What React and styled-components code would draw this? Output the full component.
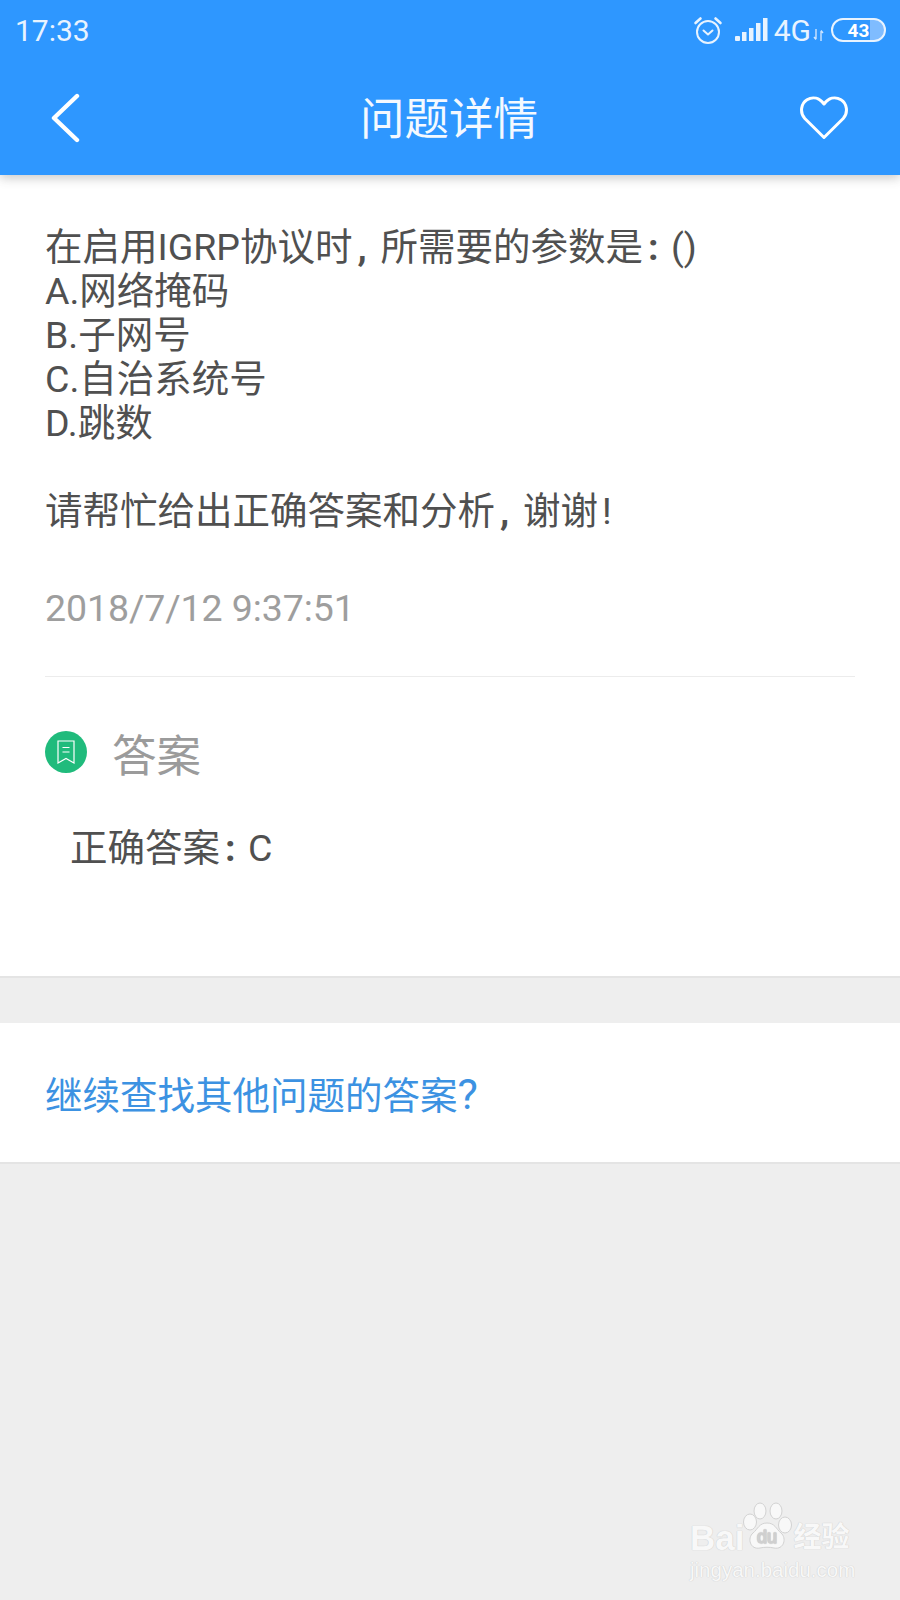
import styled, { createGlobalStyle } from "styled-components";

const GlobalStyle = createGlobalStyle`
  * { box-sizing: border-box; }
  html, body { margin: 0; padding: 0; background: #eeeeee; }
  body { font-family: Roboto, "Noto Sans CJK SC", sans-serif; }
`;

const Page = styled.div`
  position: relative;
  width: 900px;
  height: 1600px;
  overflow: hidden;
  background: #eeeeee;
`;

const Header = styled.header`
  position: relative;
  height: 175px;
  background: #2e97ff;
  box-shadow: 0 3px 10px rgba(60, 60, 60, 0.28);
  color: #fff;
`;

const StatusBar = styled.div`
  display: flex;
  align-items: center;
  justify-content: space-between;
  height: 60px;
  padding: 0 14px 0 15px;
`;

const Time = styled.span`
  font-size: 30px;
  font-weight: 400;
  color: #e8f3ff;
`;

const StatusIcons = styled.div`
  display: flex;
  align-items: center;
`;

const NetText = styled.span`
  font-size: 30px;
  font-weight: 400;
  margin-left: 6px;
  color: #e8f3ff;
`;

const Battery = styled.div`
  display: flex;
  align-items: center;
  justify-content: center;
  width: 55px;
  height: 24px;
  margin-left: 7px;
  border: 2px solid #e8f3ff;
  border-radius: 12px;
  font-size: 19px;
  font-weight: 700;
  background: linear-gradient(90deg, #2e97ff 0 72%, #7fbcff 72%);
`;

const Toolbar = styled.div`
  display: grid;
  grid-template-columns: 1fr auto 1fr;
  align-items: center;
  height: 115px;
  padding: 0 52px 0 50px;
`;

const ToolbarEnd = styled.div`
  display: flex;
  justify-content: ${(p) => (p.$right ? "flex-end" : "flex-start")};
`;

const Title = styled.h1`
  margin: 0;
  padding-top: 5px;
  font-size: 44.5px;
  font-weight: 400;
  line-height: 1;
  color: #f4f9ff;
`;

const Card = styled.section`
  background: #fff;
  border-bottom: 2px solid #e4e4e4;
`;

const Question = styled.div`
  padding: 50px 45px 0;
`;

const QuestionText = styled.p`
  margin: 0;
  font-size: 37.5px;
  line-height: 44px;
  color: #505050;
  white-space: pre-line;
`;

const Punct = styled.span`
  display: inline-block;
  width: 28px;
  padding-left: 5px;
  font-weight: 700;
`;

const Bang = styled.span`
  padding-left: 4px;
`;

const DateText = styled.div`
  margin-top: 53px;
  font-size: 37.5px;
  line-height: 44px;
  letter-spacing: -0.1px;
  color: #9e9e9e;
`;

const Divider = styled.div`
  height: 1px;
  margin: 46px 45px 0;
  background: #ececec;
`;

const AnswerHead = styled.div`
  display: flex;
  align-items: flex-start;
  gap: 25px;
  margin: 54px 45px 0;
`;

const Badge = styled.span`
  display: flex;
  align-items: center;
  justify-content: center;
  width: 42px;
  height: 42px;
  border-radius: 50%;
  background: #20bb7c;
`;

const AnswerTitle = styled.span`
  padding-top: 4px;
  font-size: 44.5px;
  line-height: 44px;
  color: #9b9b9b;
`;

const AnswerText = styled.div`
  margin: 47px 70px 0;
  padding-bottom: 106px;
  font-size: 37.5px;
  line-height: 44px;
  color: #505050;
`;

const MoreCard = styled.section`
  display: flex;
  align-items: center;
  height: 141px;
  margin-top: 45px;
  padding: 4px 45px 0;
  background: #fff;
  border-bottom: 2px solid #e4e4e4;
`;

const MoreLink = styled.a`
  font-size: 37.5px;
  line-height: 44px;
  color: #3c92e2;
`;

const BigMark = styled.span`
  font-size: 43px;
  line-height: 44px;
`;

const Watermark = styled.div`
  position: absolute;
  left: 690px;
  top: 1502px;
  width: 164px;
  color: #f8f8f8;
  text-shadow: 0 0 1px #cfcfcf, 0 0 1px #cfcfcf;
`;

const MarkRow = styled.div`
  display: flex;
  align-items: flex-end;
  height: 54px;
`;

const MarkBrand = styled.span`
  font-family: "Liberation Sans", sans-serif;
  font-size: 35px;
  font-weight: 700;
  line-height: 36px;
  margin-right: -2px;
`;

const MarkCn = styled.span`
  font-size: 28px;
  font-weight: 700;
  line-height: 36px;
  margin-left: 1px;
`;

const MarkUrl = styled.div`
  margin-top: 4px;
  font-family: "Liberation Sans", sans-serif;
  font-size: 20.5px;
  line-height: 20px;
  white-space: nowrap;
`;

const Alarm = () => (
  <svg width="30" height="30" viewBox="0 0 30 30" fill="none" stroke="#e8f3ff" strokeWidth="2" strokeLinecap="round" strokeLinejoin="round">
    <circle cx="15" cy="17" r="11" />
    <path d="M10.5 15.5 15 19.5 19.5 15.5" />
    <path d="M2.5 8 7.5 3.5" strokeWidth="2.6" />
    <path d="M27.5 8 22.5 3.5" strokeWidth="2.6" />
  </svg>
);

const Signal = () => (
  <svg width="33" height="24" viewBox="0 0 33 24" fill="#e8f3ff" style={{ marginLeft: 12 }}>
    <rect x="0" y="18" width="5" height="5" rx="1" />
    <rect x="7" y="14" width="4.5" height="9" />
    <rect x="14" y="10" width="4.5" height="13" />
    <rect x="21" y="5" width="4.5" height="18" />
    <rect x="28" y="0" width="4.5" height="23" />
  </svg>
);

const DataArrows = () => (
  <svg width="11" height="12" viewBox="0 0 11 12" fill="none" stroke="#cfe5ff" strokeWidth="1.4" style={{ alignSelf: "flex-end", marginBottom: 7, marginLeft: 2 }}>
    <path d="M3 0v10M1 8l2 2.5" />
    <path d="M8 12V2M10 4 8 1.5" />
  </svg>
);

const BackIcon = () => (
  <svg width="32" height="50" viewBox="0 0 32 50" fill="none" stroke="#fff" strokeWidth="4.4" strokeLinecap="round" strokeLinejoin="round">
    <path d="M27 3 4 25l23 22" />
  </svg>
);

const HeartIcon = () => (
  <svg width="48" height="44" viewBox="0 0 48 44" fill="none" stroke="#fff" strokeWidth="3" strokeLinejoin="round">
    <path d="M24 41.5 4.8 22.5C-0.5 16.5 1 7.5 7 3.8 13 0.2 19.5 2 24 8 28.5 2 35 0.2 41 3.8 47 7.5 48.5 16.5 43.2 22.5Z" />
  </svg>
);

const BookmarkIcon = () => (
  <svg width="18" height="24" viewBox="0 0 18 24" fill="none" stroke="#fff" strokeWidth="1.2">
    <path d="M1 1h16v22l-8-4.500-8 4.500z" />
    <path d="M5.500 7.500h7M5.500 12h7" />
  </svg>
);

const PawIcon = () => (
  <svg width="50" height="54" viewBox="0 0 50 54" fill="#f8f8f8" stroke="#d2d2d2" strokeWidth="1">
    <ellipse cx="8" cy="20" rx="6.5" ry="8" />
    <ellipse cx="18" cy="9" rx="6" ry="8" />
    <ellipse cx="34" cy="9" rx="6" ry="8" />
    <ellipse cx="43" cy="23" rx="6.5" ry="8" />
    <path d="M25 21c8 0 9 6 14 10 6 5 3 17-7 15-4-1-10-1-14 0-10 2-13-10-7-15 5-4 6-10 14-10z" />
    <text x="25" y="41" textAnchor="middle" fontSize="18" fontFamily="Liberation Sans, sans-serif" stroke="#cfcfcf" fill="#f8f8f8">du</text>
  </svg>
);

export default function App() {
  return (
    <>
      <GlobalStyle />
      <Page>
        <Header>
          <StatusBar>
            <Time>17:33</Time>
            <StatusIcons>
              <Alarm />
              <Signal />
              <NetText>4G</NetText>
              <DataArrows />
              <Battery>43</Battery>
            </StatusIcons>
          </StatusBar>
          <Toolbar>
            <ToolbarEnd>
              <BackIcon />
            </ToolbarEnd>
            <Title>问题详情</Title>
            <ToolbarEnd $right>
              <HeartIcon />
            </ToolbarEnd>
          </Toolbar>
        </Header>

        <Card>
          <Question>
            <QuestionText>
              在启用IGRP协议时<Punct>,</Punct>所需要的参数是<Punct>:</Punct>()
              {"\nA.网络掩码\nB.子网号\nC.自治系统号\nD.跳数\n\n"}
              请帮忙给出正确答案和分析<Punct>,</Punct>谢谢<Bang>!</Bang>
            </QuestionText>
            <DateText>2018/7/12 9:37:51</DateText>
          </Question>
          <Divider />
          <AnswerHead>
            <Badge>
              <BookmarkIcon />
            </Badge>
            <AnswerTitle>答案</AnswerTitle>
          </AnswerHead>
          <AnswerText>
            正确答案<Punct>:</Punct>C
          </AnswerText>
        </Card>

        <MoreCard>
          <MoreLink>
            继续查找其他问题的答案<BigMark>?</BigMark>
          </MoreLink>
        </MoreCard>

        <Watermark>
          <MarkRow>
            <MarkBrand>Bai</MarkBrand>
            <PawIcon />
            <MarkCn>经验</MarkCn>
          </MarkRow>
          <MarkUrl>jingyan.baidu.com</MarkUrl>
        </Watermark>
      </Page>
    </>
  );
}
